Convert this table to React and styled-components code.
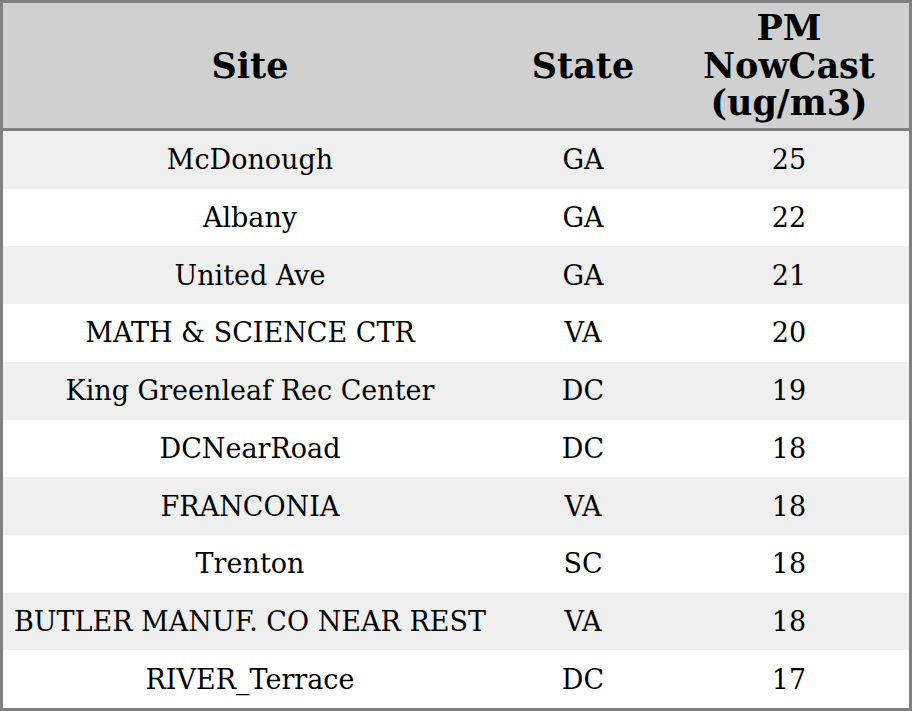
import React from "react";
import styled, { createGlobalStyle } from "styled-components";

const Global = createGlobalStyle`
  html, body { margin: 0; padding: 0; background: #ffffff; }
  body { font-family: "DejaVu Serif", serif; }
`;

const Table = styled.div`
  box-sizing: border-box;
  width: 912px;
  height: 711px;
  border: 3px solid #808080;
  display: flex;
  flex-direction: column;
  color: #000;
  font-family: "DejaVu Serif", serif;
`;

const Grid = styled.div`
  display: grid;
  grid-template-columns: 494px 172px 240px;
  align-items: center;
  justify-items: center;
  text-align: center;
`;

const HeaderRow = styled(Grid)`
  height: 125px;
  flex: none;
  background: #d0d0d0;
  border-bottom: 3px solid #808080;
  font-weight: bold;
  font-size: 35px;
  line-height: 37.5px;
`;

const Row = styled(Grid)`
  flex: 1;
  background: ${(p) => (p.$odd ? "#efefef" : "#ffffff")};
  font-size: 27px;
`;

const rows = [
  ["McDonough", "GA", "25"],
  ["Albany", "GA", "22"],
  ["United Ave", "GA", "21"],
  ["MATH & SCIENCE CTR", "VA", "20"],
  ["King Greenleaf Rec Center", "DC", "19"],
  ["DCNearRoad", "DC", "18"],
  ["FRANCONIA", "VA", "18"],
  ["Trenton", "SC", "18"],
  ["BUTLER MANUF. CO NEAR REST", "VA", "18"],
  ["RIVER_Terrace", "DC", "17"],
];

export default function App() {
  return (
    <>
      <Global />
      <Table>
        <HeaderRow>
          <div>Site</div>
          <div>State</div>
          <div>PM<br />NowCast<br />(ug/m3)</div>
        </HeaderRow>
        {rows.map((r, i) => (
          <Row key={i} $odd={i % 2 === 0}>
            <div>{r[0]}</div>
            <div>{r[1]}</div>
            <div>{r[2]}</div>
          </Row>
        ))}
      </Table>
    </>
  );
}
